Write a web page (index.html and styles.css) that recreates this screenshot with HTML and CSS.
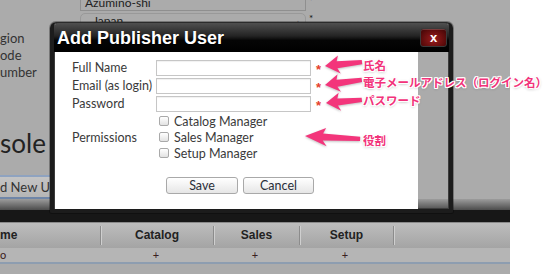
FILE: index.html
```html
<!DOCTYPE html>
<html lang="en">
<head>
  <meta charset="UTF-8" />
  <title>Add Publisher User</title>
  <link rel="stylesheet" href="styles.css">
</head>
<body>
  <div class="screen">
    <div class="backdrop">
      <div class="field-row">
        <span class="field">Azumino-shi</span><span class="bg-req">*</span>
      </div>
      <div class="field-row">
        <span class="field select">Japan<span class="caret">&#9650;</span></span><span class="bg-req">*</span>
      </div>
      <div class="side-labels">
        <div>gion</div>
        <div>ode</div>
        <div>umber</div>
      </div>
      <h1 class="console-title">sole Users</h1>
      <div class="new-user">d New User</div>
      <div class="shade"></div>
      <div class="blackbar"></div>
      <div class="grid-head">
        <div class="cell first">me</div>
        <div class="cell">Catalog</div>
        <div class="cell">Sales</div>
        <div class="cell">Setup</div>
        <div class="cell last"></div>
      </div>
      <div class="grid-row">
        <div class="cell first">o</div>
        <div class="cell">+</div>
        <div class="cell">+</div>
        <div class="cell">+</div>
        <div class="cell last"></div>
      </div>
    </div>

    <div class="dialog">
      <div class="dialog-head">
        <span class="dialog-title">Add Publisher User</span>
        <button type="button" class="close-btn">x</button>
      </div>
      <div class="dialog-body">
        <form class="panel">
          <div class="fields">
            <label>Full Name</label>
            <input type="text" />
            <span class="req">*</span>

            <label>Email (as login)</label>
            <input type="text" />
            <span class="req">*</span>

            <label>Password</label>
            <input type="password" />
            <span class="req">*</span>
          </div>
          <div class="perms">
            <span class="perms-label">Permissions</span>
            <div class="perms-list">
              <label class="check"><input type="checkbox" />Catalog Manager</label>
              <label class="check"><input type="checkbox" />Sales Manager</label>
              <label class="check"><input type="checkbox" />Setup Manager</label>
            </div>
          </div>
          <div class="actions">
            <button type="submit" class="btn save-btn">Save</button>
            <button type="button" class="btn">Cancel</button>
          </div>
        </form>
      </div>
    </div>

    <svg class="arrows" width="70" height="100" viewBox="300 50 70 100">
      <defs>
        <path id="arrow" d="M0 0 L15 -9 L13 -3.5 L40 -2.2 L40 2.2 L13 3.5 L16 9 Z" />
      </defs>
      <use href="#arrow" transform="translate(325 66) rotate(-6) scale(0.93 1)" />
      <use href="#arrow" transform="translate(325 85) rotate(-8) scale(0.93 1)" />
      <use href="#arrow" transform="translate(326 103) rotate(-5) scale(0.9 1)" />
      <use href="#arrow" transform="translate(305 136) rotate(3) scale(1.38 1)" />
    </svg>
    <span class="note note-name">氏名</span>
    <span class="note note-email">電子メールアドレス（ログイン名）</span>
    <span class="note note-pass">パスワード</span>
    <span class="note note-role">役割</span>
  </div>
</body>
</html>
```

FILE: styles.css
```css
body {
  margin: 0;
  background: #fff;
  font-family: Lato, "Liberation Sans", sans-serif;
}

.screen {
  position: relative;
  width: 559px;
  height: 274px;
  overflow: hidden;
}

/* page behind the dialog */
.backdrop {
  width: 510px;
  height: 274px;
  overflow: hidden;
  background: #ababab;
  color: #333;
}

.field-row {
  display: flex;
  align-items: flex-start;
  margin-left: 80px;
  height: 16px;
}

.field-row:first-child {
  margin-top: -5px;
  margin-bottom: 2px;
}

.field {
  box-sizing: border-box;
  width: 226px;
  height: 16px;
  padding: 0 4px;
  border: 1px solid #8f8f8f;
  font-size: 12px;
  line-height: 14px;
  color: #222;
}

.select {
  display: flex;
  justify-content: space-between;
  border-radius: 5px;
  padding-left: 12px;
  border-color: #999;
}

.caret {
  font-size: 6px;
  color: #777;
  line-height: 16px;
}

.bg-req {
  font-size: 10px;
  line-height: 10px;
  margin-left: 3px;
  color: #111;
}

.side-labels {
  margin-top: 1px;
  font-size: 13px;
  line-height: 17px;
}

.console-title {
  margin: 47px 0 0;
  font-size: 26px;
  font-weight: normal;
  line-height: 30px;
  color: #222;
  white-space: nowrap;
}

.new-user {
  box-sizing: border-box;
  margin-top: 17px;
  height: 24px;
  width: 60px;
  border-top: 2px solid #8fa3c0;
  border-bottom: 2px solid #6f86a8;
  background: linear-gradient(#c4c4c4, #b6b6b6);
  font-size: 13px;
  line-height: 20px;
  color: #333;
  white-space: nowrap;
  overflow: hidden;
}

.shade {
  height: 11px;
  background: linear-gradient(#9c9c9c, #4c4c4c);
}

.blackbar {
  height: 12px;
  background: #171717;
}

.grid-head,
.grid-row {
  display: flex;
}

.grid-head {
  height: 26px;
  background: linear-gradient(#bdbdbd, #a4a4a4);
  border-top: 1px solid #8a8a8a;
  box-sizing: border-box;
  font-family: "Liberation Sans", sans-serif;
  font-weight: bold;
  font-size: 12px;
  color: #222;
}

.grid-head .cell {
  text-align: center;
  width: 112px;
  box-shadow: inset 1px 0 0 #cfcfcf;
  border-left: 1px solid #8c8c8c;
  margin: 3px 0;
  line-height: 19px;
}

.grid-head .cell:nth-child(3) { width: 85px; }
.grid-head .cell:nth-child(4) { width: 93px; }

.grid-row {
  height: 16px;
  box-sizing: border-box;
  background: #b5b5b5;
  border-bottom: 2px solid #8d9db0;
  font-size: 11px;
  line-height: 14px;
  color: #3a2020;
}

.grid-row .cell {
  width: 112px;
  text-align: center;
}

.grid-row .cell:nth-child(3) { width: 86px; }
.grid-row .cell:nth-child(4) { width: 94px; }

.grid-head .first,
.grid-row .first {
  width: 100px;
  text-align: left;
  border-left: 0;
  box-shadow: none;
}

.grid-head .last,
.grid-row .last {
  flex: 1;
}

/* dialog */
.dialog {
  position: absolute;
  left: 50px;
  top: 22px;
  width: 403px;
  height: 191px;
  box-sizing: border-box;
  border: 4px solid #1c1c1c;
  border-top: 1px solid #2c2c2c;
  border-radius: 6px 6px 2px 2px;
  box-shadow: 0 0 0 1px rgba(0, 0, 0, 0.3), inset 0 0 0 1px #3c3c3c;
  display: flex;
  flex-direction: column;
}

.dialog-head {
  height: 29px;
  display: flex;
  align-items: center;
  justify-content: space-between;
  padding: 0 2px 0 3px;
  border-radius: 5px 5px 0 0;
  background: linear-gradient(#505050, #232323 45%, #050505 60%, #000);
}

.dialog-title {
  padding-top: 2px;
  font-family: "Liberation Sans", sans-serif;
  font-weight: bold;
  font-size: 18px;
  color: #fff;
  text-shadow: 0 1px 1px #000;
}

.close-btn {
  width: 27px;
  height: 19px;
  padding: 0;
  border: 1px solid #3a3a3a;
  border-radius: 3px;
  background: radial-gradient(ellipse at 50% 60%, #9c1c1c, #5a0b0b 70%, #3c0606);
  box-shadow: inset 0 1px 0 rgba(255, 255, 255, 0.2);
  color: #fff;
  font-family: "Liberation Sans", sans-serif;
  font-weight: bold;
  font-size: 13px;
  line-height: 15px;
}

.dialog-body {
  flex: 1;
  display: flex;
}

.panel {
  width: 363px;
  margin: 0 0 0 1px;
  padding: 8px 0 0 17px;
  box-sizing: border-box;
  background: #fff;
  font-size: 12.5px;
  color: #3a3a3a;
}

.fields {
  display: grid;
  grid-template-columns: 84px 155px auto;
  row-gap: 2px;
  align-items: center;
}

.fields label {
  line-height: 16px;
  white-space: nowrap;
}

.fields input {
  box-sizing: border-box;
  width: 155px;
  height: 16px;
  margin: 0;
  border: 1px solid #c6c6c6;
  box-shadow: inset 0 1px 1px rgba(0, 0, 0, 0.06);
}

.req {
  margin-left: 5px;
  color: #e5412c;
  font-family: "Liberation Sans", sans-serif;
  font-size: 13px;
  font-weight: bold;
  line-height: 12px;
  padding-top: 4px;
}

.perms {
  display: flex;
  align-items: center;
  margin-top: 1px;
}

.perms-label {
  width: 84px;
  flex: none;
}

.check {
  display: flex;
  align-items: center;
  height: 16px;
}

.check input {
  appearance: none;
  box-sizing: border-box;
  width: 10px;
  height: 10px;
  margin: 0 5px 0 3px;
  border: 1px solid #a9a9a9;
  border-radius: 2px;
  background: linear-gradient(#fff, #e2e2e2);
}

.actions {
  display: flex;
  gap: 5px;
  margin: 16px 0 0 94px;
}

.btn {
  height: 17px;
  width: 71px;
  padding: 0;
  border: 1px solid #a9a9a9;
  border-radius: 3px;
  background: linear-gradient(#ffffff, #e6e6e6);
  font-family: Lato, "Liberation Sans", sans-serif;
  font-size: 12.5px;
  line-height: 15px;
  color: #2a2f3a;
}

.save-btn {
  width: 72px;
}

/* annotations */
.arrows {
  position: absolute;
  left: 300px;
  top: 50px;
  fill: #f3357b;
  overflow: visible;
  filter: drop-shadow(0 1px 1px rgba(0, 0, 0, 0.25));
}

.note {
  position: absolute;
  left: 363px;
  font-family: "Noto Sans CJK JP", sans-serif;
  font-weight: bold;
  font-size: 11.5px;
  line-height: 14px;
  color: #f2327a;
  white-space: nowrap;
  text-shadow: 1px 0 0 #fff, -1px 0 0 #fff, 0 1px 0 #fff, 0 -1px 0 #fff,
    1px 1px 0 #fff, -1px -1px 0 #fff, 1px -1px 0 #fff, -1px 1px 0 #fff,
    0 1px 3px rgba(0, 0, 0, 0.4);
}

.note-name { top: 58px; }
.note-email { top: 75px; }
.note-pass { top: 93px; }
.note-role { top: 133px; }
```
